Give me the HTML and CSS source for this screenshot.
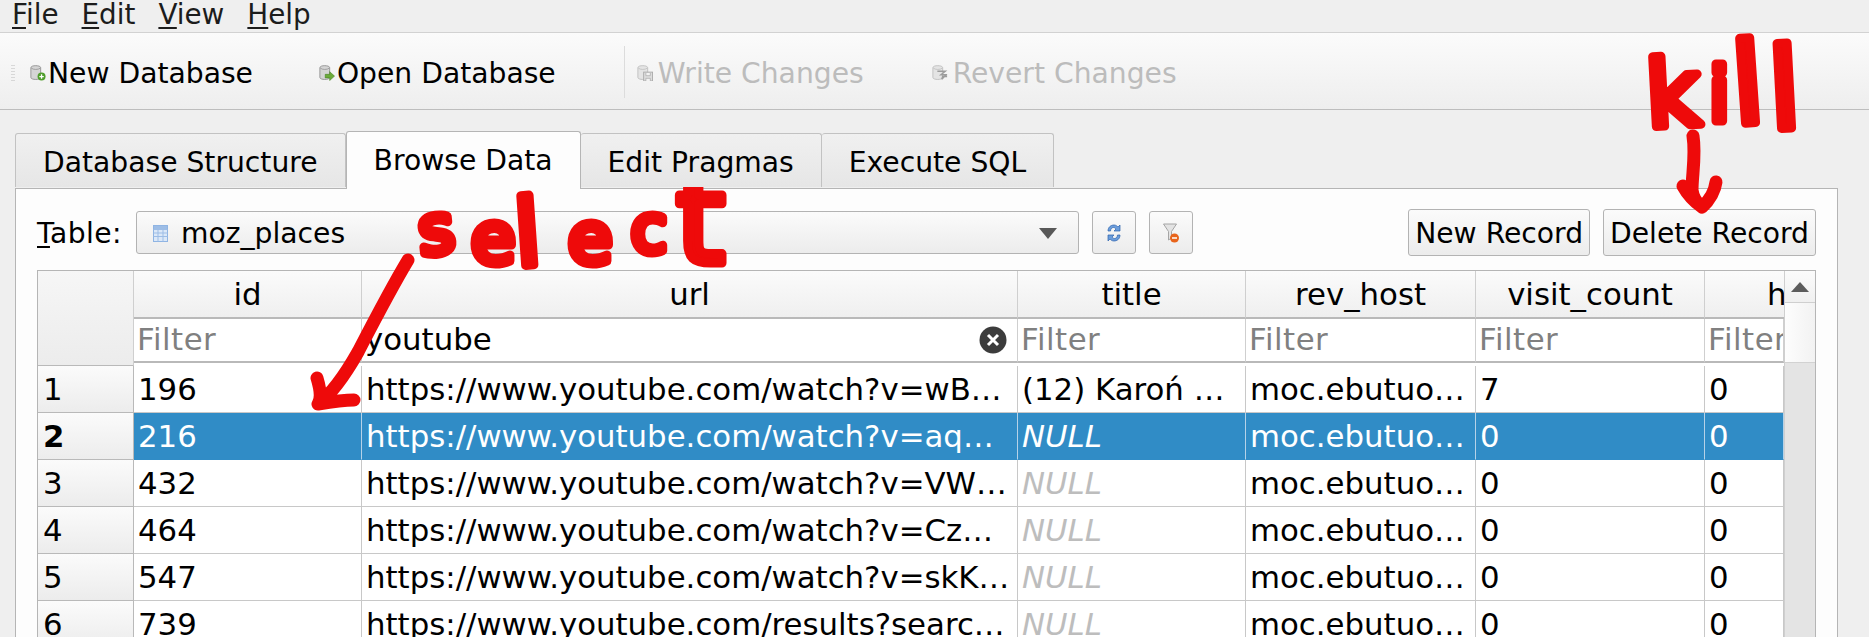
FILE: index.html
```html
<!DOCTYPE html>
<html lang="en">
<head>
<meta charset="utf-8">
<title>DB Browser for SQLite</title>
<link rel="stylesheet" href="styles.css">
</head>
<body>
<nav class="menubar">
  <span class="menu"><u>F</u>ile</span>
  <span class="menu"><u>E</u>dit</span>
  <span class="menu"><u>V</u>iew</span>
  <span class="menu"><u>H</u>elp</span>
</nav>
<div class="toolbar">
  <span class="grip"></span>
  <span class="tool tool-new">
    <svg class="tool-icon" viewBox="0 0 18 18"><path d="M1 3c0-3 11-3 11 0v11c0 3-11 3-11 0z" fill="#d5d5d5" stroke="#8f8f8f"/><path d="M1.500 3.500c2 2 8 2 10 0" fill="none" stroke="#9a9a9a"/><circle cx="13" cy="13" r="4.500" fill="#4f9e2c"/><path d="M13 10.500v5M10.500 13h5" stroke="#fff" stroke-width="1.500"/></svg>
    New Database
  </span>
  <span class="tool tool-open">
    <svg class="tool-icon" viewBox="0 0 18 18"><path d="M1 3c0-3 11-3 11 0v11c0 3-11 3-11 0z" fill="#d5d5d5" stroke="#8f8f8f"/><path d="M1.500 3.500c2 2 8 2 10 0" fill="none" stroke="#9a9a9a"/><path d="M7 10.500h5V7.500l5.500 5-5.500 5v-3H7z" fill="#6cab3a" stroke="#3f7d1e" stroke-width=".6"/></svg>
    Open Database
  </span>
  <span class="tool-sep"></span>
  <span class="tool tool-off tool-write">
    <svg class="tool-icon" viewBox="0 0 18 18"><path d="M1 3c0-3 11-3 11 0v11c0 3-11 3-11 0z" fill="#e4e4e4" stroke="#bdbdbd"/><path d="M1.500 3.500c2 2 8 2 10 0" fill="none" stroke="#c2c2c2"/><rect x="7.500" y="8" width="10" height="10" fill="#dcdcdc" stroke="#a9a9a9"/><path d="M10 9v3h5V9M10 18v-3h5v3" fill="#f2f2f2" stroke="#a9a9a9" stroke-width=".8"/></svg>
    Write Changes
  </span>
  <span class="tool tool-off tool-revert">
    <svg class="tool-icon" viewBox="0 0 18 18"><path d="M1 3c0-3 11-3 11 0v11c0 3-11 3-11 0z" fill="#e4e4e4" stroke="#bdbdbd"/><path d="M1.500 3.500c2 2 8 2 10 0" fill="none" stroke="#c2c2c2"/><path d="M6 7h9l-5 4h7M16 11l-5 5 1-3h5" fill="none" stroke="#9c9c9c" stroke-width="1.600"/></svg>
    Revert Changes
  </span>
</div>
<main class="workspace">
  <div class="tabs">
    <span class="tab tab-structure">Database Structure</span>
    <span class="tab tab-active">Browse Data</span>
    <span class="tab">Edit Pragmas</span>
    <span class="tab">Execute SQL</span>
  </div>
  <section class="pane">
    <div class="controls">
      <span class="table-label"><u>T</u>able:</span>
      <div class="combo">
        <svg class="combo-icon" viewBox="0 0 15 17"><rect x=".5" y=".5" width="14" height="16" fill="#dbe8f8" stroke="#8fb4e3"/><path d="M.5 4.500h14M.5 8h14M.5 11.500h14M5 4.500v12M10 4.500v12" stroke="#9dbde6" fill="none"/><rect x="1" y="1" width="13" height="3" fill="#9dbde6"/></svg>
        <span class="combo-text">moz_places</span>
        <span class="combo-arrow"></span>
      </div>
      <button class="icon-btn" type="button" aria-label="Refresh">
        <svg viewBox="0 0 16 20" width="16" height="20"><path d="M2 8c0-4 3-6 6-6 2 0 3 1 4 2l2-2v6H8l2-2c-1-1-1.500-1.500-2.500-1.500C6 4.500 4.500 6 4.500 8z" fill="#6b9ddb" stroke="#2d62ac" stroke-width=".7"/><path d="M14 12c0 4-3 6-6 6-2 0-3-1-4-2l-2 2v-6h6l-2 2c1 1 1.500 1.500 2.500 1.500 1.500 0 3-1.500 3-3.500z" fill="#6b9ddb" stroke="#2d62ac" stroke-width=".7"/></svg>
      </button>
      <button class="icon-btn" type="button" aria-label="Clear filters">
        <svg viewBox="0 0 16 20" width="16" height="20"><path d="M.5 1h13L8.500 8.500V15L5.500 17V8.500z" fill="#e3e3e3" stroke="#a5a5a5"/><circle cx="11.500" cy="15" r="4.500" fill="#e8641b"/><path d="M9 15h5" stroke="#fff" stroke-width="1.500"/></svg>
      </button>
      <button class="text-btn text-btn-first" type="button">New Record</button>
      <button class="text-btn" type="button">Delete Record</button>
    </div>
    <div class="table">
      <div class="grid">
        <div class="head-grid">
          <span class="corner"></span>
          <span class="head">id</span>
          <span class="head">url</span>
          <span class="head">title</span>
          <span class="head">rev_host</span>
          <span class="head">visit_count</span>
          <span class="head head-clip">hidden</span>
          <span class="filter">Filter</span>
          <span class="filter filter-set">youtube<span class="clear"><svg viewBox="0 0 28 28" width="28" height="28"><circle cx="14" cy="14" r="13.500" fill="#3c3c3c"/><path d="M9 9l10 10M19 9L9 19" stroke="#fff" stroke-width="3"/></svg></span></span>
          <span class="filter">Filter</span>
          <span class="filter">Filter</span>
          <span class="filter">Filter</span>
          <span class="filter">Filter</span>
        </div>
        <div class="rows">
          <div class="row data-row">
            <span class="num">1</span><span class="cell">196</span><span class="cell">https://www.youtube.com/watch?v=wB…</span><span class="cell">(12) Karoń …</span><span class="cell">moc.ebutuo…</span><span class="cell">7</span><span class="cell">0</span>
          </div>
          <div class="row data-row selected">
            <span class="num">2</span><span class="cell">216</span><span class="cell">https://www.youtube.com/watch?v=aq…</span><span class="cell null">NULL</span><span class="cell">moc.ebutuo…</span><span class="cell">0</span><span class="cell">0</span>
          </div>
          <div class="row data-row">
            <span class="num">3</span><span class="cell">432</span><span class="cell">https://www.youtube.com/watch?v=VW…</span><span class="cell null">NULL</span><span class="cell">moc.ebutuo…</span><span class="cell">0</span><span class="cell">0</span>
          </div>
          <div class="row data-row">
            <span class="num">4</span><span class="cell">464</span><span class="cell">https://www.youtube.com/watch?v=Cz…</span><span class="cell null">NULL</span><span class="cell">moc.ebutuo…</span><span class="cell">0</span><span class="cell">0</span>
          </div>
          <div class="row data-row">
            <span class="num">5</span><span class="cell">547</span><span class="cell">https://www.youtube.com/watch?v=skK…</span><span class="cell null">NULL</span><span class="cell">moc.ebutuo…</span><span class="cell">0</span><span class="cell">0</span>
          </div>
          <div class="row data-row">
            <span class="num">6</span><span class="cell">739</span><span class="cell">https://www.youtube.com/results?searc…</span><span class="cell null">NULL</span><span class="cell">moc.ebutuo…</span><span class="cell">0</span><span class="cell">0</span>
          </div>
        </div>
      </div>
      <div class="scrollbar">
        <div class="scroll-up"><span class="scroll-arrow"></span></div>
        <div class="scroll-thumb"></div>
      </div>
    </div>
  </section>
</main>
<svg class="scrawl-layer" viewBox="0 0 1869 637" width="1869" height="637">
  <text class="scrawl"><tspan class="sz-68" x="421" y="255" rotate="-6">s</tspan><tspan class="sz-72" x="471" y="263">e</tspan><tspan class="sz-92" x="517" y="266" rotate="-4">l</tspan><tspan class="sz-72" x="568" y="263">e</tspan><tspan class="sz-65" x="631" y="252">c</tspan><tspan class="sz-125" x="676" y="263">t</tspan></text>
  <text class="scrawl"><tspan class="sz-92" x="1648" y="127" rotate="-3">k</tspan><tspan class="sz-74" x="1709" y="121">i</tspan><tspan class="sz-112" x="1735" y="124" rotate="-4">l</tspan><tspan class="sz-112" x="1771" y="129" rotate="-3">l</tspan></text>
  <path class="scrawl-line" d="M408 260C390 290 372 325 358 352C345 375 330 395 318 404M317 378C320 388 322 398 318 404C330 402 342 400 354 400"/>
  <path class="scrawl-line" d="M1693 136C1696 155 1692 175 1692 190C1693 198 1698 204 1702 207C1710 200 1715 190 1716 182M1683 186C1688 195 1695 202 1702 207"/>
</svg>
</body>
</html>
```
FILE: styles.css
```css
* { box-sizing: border-box; }
html, body { margin: 0; height: 637px; overflow: hidden; }
body {
  position: relative;
  background: #efefef;
  color: #000;
  font-family: "DejaVu Sans", sans-serif;
  font-size: 28.2px;
}
u { text-decoration-thickness: 2px; text-underline-offset: 3px; }

.menubar {
  display: flex;
  gap: 23px;
  height: 33px;
  padding-left: 12px;
  border-bottom: 1px solid #d2d2d2;
  font-size: 27.8px;
  line-height: 29px;
  color: #1c1c1c;
}

.toolbar {
  display: flex;
  align-items: center;
  height: 77px;
  padding: 4px 0 0 11px;
  border-bottom: 1px solid #bdbdbd;
  background: linear-gradient(#fbfbfb, #eeeeee);
}
.grip {
  width: 4px;
  height: 18px;
  margin-right: 15px;
  background-image: radial-gradient(#b5b5b5 30%, transparent 40%);
  background-size: 2px 3px;
}
.tool { display: flex; align-items: center; gap: 2px; white-space: nowrap; }
.tool-icon { width: 16px; height: 16px; flex: none; }
.tool-open { margin-left: 66px; }
.tool-off { color: #bcbcbc; gap: 5px; }
.tool-sep { width: 1px; height: 52px; margin: -2px 12px 0 68px; background: #dcdcdc; }
.tool-revert { margin-left: 68px; }

.workspace { padding: 21px 31px 0 15px; }
.tabs { display: flex; align-items: flex-end; height: 57px; position: relative; z-index: 1; }
.tab {
  display: flex;
  align-items: center;
  justify-content: center;
  height: 54px;
  padding: 3px 27px 0;
  margin-bottom: 1px;
  background: linear-gradient(#f0f0f0, #e6e6e6);
  border: 1px solid #c2c2c2;
  border-bottom: 0;
  border-left: 0;
  border-radius: 3px 3px 0 0;
}
.tab-structure { border-left: 1px solid #c2c2c2; }
.tab-active {
  height: 58px;
  margin-bottom: -1px;
  padding-top: 0;
  padding-bottom: 1px;
  background: #fdfdfd;
  border-color: #b5b5b5;
  border-left: 1px solid #b5b5b5;
}

.pane {
  height: 460px;
  padding: 20px 21px 0;
  background: #fdfdfd;
  border: 1px solid #b5b5b5;
}
.controls { display: flex; align-items: center; height: 47px; gap: 13px; }
.table-label { width: 86px; padding-top: 2px; white-space: nowrap; letter-spacing: .4px; }
.combo {
  display: flex;
  align-items: center;
  width: 943px;
  height: 43px;
  padding: 2px 21px 0 16px;
  background: linear-gradient(#fbfbfb, #ececec);
  border: 1px solid #b3b3b3;
  border-radius: 3px;
}
.combo-icon { width: 15px; height: 17px; flex: none; }
.combo-text { margin-left: 13px; flex: 1; }
.combo-arrow {
  width: 0;
  height: 0;
  border-left: 9px solid transparent;
  border-right: 9px solid transparent;
  border-top: 11px solid #585858;
}
.icon-btn {
  display: flex;
  align-items: center;
  justify-content: center;
  width: 44px;
  height: 43px;
  padding: 0;
  background: linear-gradient(#fbfbfb, #ececec);
  border: 1px solid #b3b3b3;
  border-radius: 3px;
}
.text-btn {
  height: 47px;
  padding: 2px 6px 0;
  font: inherit;
  color: #000;
  background: linear-gradient(#fbfbfb, #ececec);
  border: 1px solid #b3b3b3;
  border-radius: 3px;
  white-space: nowrap;
}
.text-btn-first { margin-left: auto; }

.table {
  display: flex;
  height: 400px;
  margin-top: 14px;
  background: #fff;
  border: 1px solid #b5b5b5;
}
.grid { flex: none; width: 1746px; overflow: hidden; font-size: 30.8px; }
.head-grid,
.row {
  display: grid;
  grid-template-columns: 96px 228px 656px 228px 230px 229px 79px;
}
.head-grid { grid-template-rows: 48px 44px; }
.corner {
  grid-row: span 2;
  position: relative;
  margin-bottom: -3px;
  background: linear-gradient(#f6f6f6, #ececec);
  border-right: 1px solid #cfcfcf;
  border-bottom: 1px solid #b9b9b9;
}
.head {
  border-right: 1px solid #cfcfcf;
  border-bottom: 2px solid #b9b9b9;
  background: linear-gradient(#fbfbfb, #efefef);
  text-align: center;
  line-height: 47px;
  overflow: hidden;
  white-space: nowrap;
}
.head-clip { border-right: 0; text-align: left; padding-left: 62px; }
.filter {
  position: relative;
  padding-left: 3px;
  border-right: 1px solid #cfcfcf;
  border-bottom: 2px solid #b9b9b9;
  color: #808080;
  letter-spacing: .5px;
  line-height: 41px;
  overflow: hidden;
}
.filter-set { color: #000; letter-spacing: 0; }
.clear { position: absolute; right: 10px; top: 7px; display: flex; }
.rows { padding-top: 3px; }
.data-row { height: 47px; line-height: 46px; }
.num {
  padding-left: 5px;
  background: linear-gradient(#fbfbfb, #ececec);
  border-bottom: 1px solid #b9b9b9;
  border-right: 1px solid #b9b9b9;
}
.cell {
  padding-left: 4px;
  border-right: 1px solid #c8c8c8;
  border-bottom: 1px solid #c8c8c8;
  white-space: nowrap;
  overflow: hidden;
}
.null { color: #bdbdbd; font-style: italic; }
.selected .cell { background: #308cc6; color: #fff; border-right-color: #b5d2e8; border-bottom-color: #308cc6; }
.selected .num { font-weight: bold; }

.scrollbar { flex: 1; background: #e4e4e4; border-left: 1px solid #cfcfcf; }
.scroll-up {
  display: flex;
  justify-content: center;
  align-items: center;
  height: 32px;
  background: linear-gradient(#fbfbfb, #f0f0f0);
  border-bottom: 1px solid #cfcfcf;
}
.scroll-arrow {
  width: 0;
  height: 0;
  border-left: 9px solid transparent;
  border-right: 9px solid transparent;
  border-bottom: 10px solid #5c5c5c;
}
.scroll-thumb { height: 60px; background: linear-gradient(90deg, #fdfdfd, #f2f2f2); border-bottom: 1px solid #d2d2d2; }

.scrawl-layer { position: absolute; left: 0; top: 0; pointer-events: none; }
.scrawl {
  fill: #ee0a0a;
  stroke: #ee0a0a;
  stroke-width: 9px;
  stroke-linejoin: round;
  font-family: "DejaVu Sans", sans-serif;
}
.sz-65 { font-size: 65px; }
.sz-68 { font-size: 68px; }
.sz-72 { font-size: 72px; }
.sz-74 { font-size: 74px; }
.sz-92 { font-size: 92px; }
.sz-112 { font-size: 112px; }
.sz-125 { font-size: 125px; }
.scrawl-line {
  fill: none;
  stroke: #ee0a0a;
  stroke-width: 13px;
  stroke-linecap: round;
  stroke-linejoin: round;
}
```
